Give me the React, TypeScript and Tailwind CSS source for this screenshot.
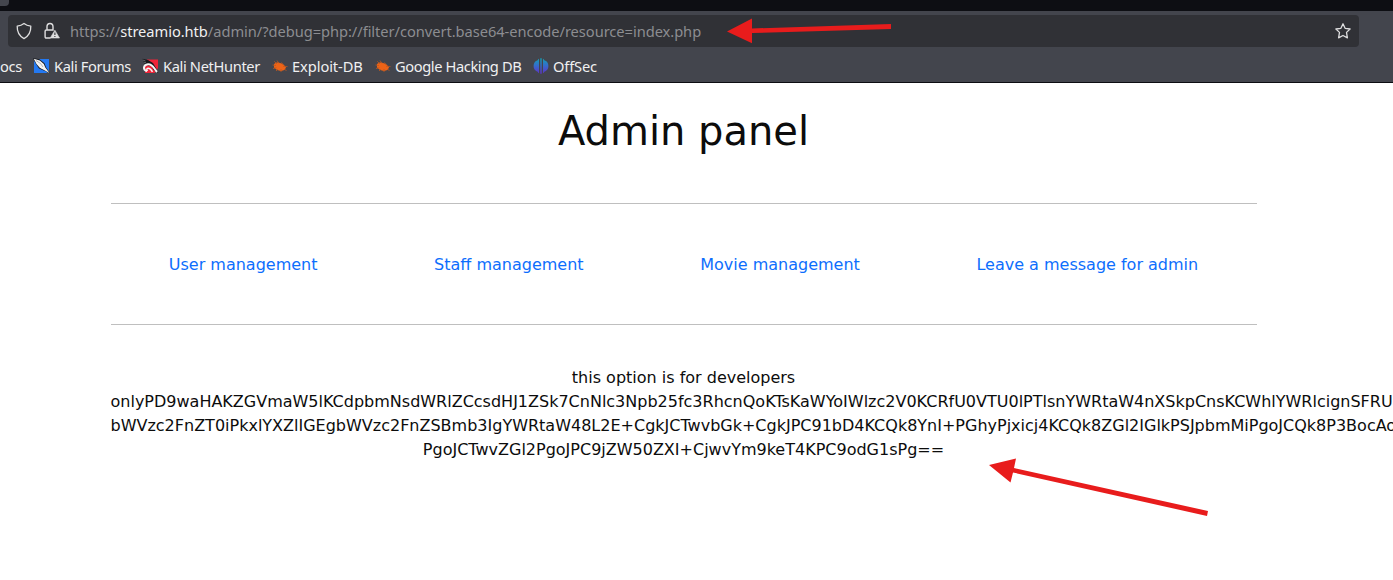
import type { ReactNode } from "react";

function ForumsIcon() {
  return (
    <svg width="17" height="16" viewBox="0 0 17 16">
      <path d="M3 1H16V12.500L13.500 15H1V4z" fill="#2479f2" />
      <path d="M0 0 6.500 1.200l5 4 1.500 4 4 5.800-7.500-3-3.500-1.500L3 6z" fill="#17191d" />
      <path d="m.8.800 6 1.700 4 3.500 1.500 3.500 4.200 5.500-6-3.200-3.500-1.800L3.500 6z" fill="#f3f3f3" />
      <path d="m3 2.500 4.500 3 2.500 3.500" stroke="#85888e" strokeWidth=".6" fill="none" />
    </svg>
  );
}

function NetHunterIcon() {
  return (
    <svg width="17" height="16" viewBox="0 0 17 16">
      <path d="M5 1.500H16V10L12.500 15H3V8z" fill="#ee2438" />
      <path d="M.5.800 6 2l5 3 3 5 2.500 5-5-3-2-4L3 7z" fill="#17191d" />
      <path d="M5 13.200C.5 11.500 1.200 6.800 6 6.200c4.500-.4 5.500 3.600 9 7.800" stroke="#f5f5f5" strokeWidth="2" fill="none" />
      <path d="M5.500 13C3 10 7.500 8.500 10.500 13.800" stroke="#f5f5f5" strokeWidth="1.500" fill="none" />
      <path d="m1 2 2.500 1M2 4.200l2 .6" stroke="#77797e" strokeWidth=".8" />
    </svg>
  );
}

function BugIcon() {
  return (
    <svg width="16" height="16" viewBox="0 0 16 16">
      <path d="M2 6 4.500 4.500h2l3 1 2.500 1.500 2 2.500-1.500 2.500-3.500 1-4-1-3-2.500z" fill="#ed6317" />
      <path d="M.5 7 4 7.500M2.300 3.300 5 6M5 2.500 7 5.500M9.500 4.500l2 2.600M11 8.300l4.500.2M1 10.500l3.500-.8M4 13l2-2M9 14v-3M12 11.200l2.500 1.300" stroke="#bd581f" strokeWidth=".8" fill="none" />
    </svg>
  );
}

function OffSecIcon() {
  return (
    <svg width="16" height="16" viewBox="0 0 16 16">
      <defs>
        <linearGradient id="offsec" gradientUnits="userSpaceOnUse" x1="0" y1="0" x2="0" y2="16">
          <stop offset="0" stopColor="#10a4b4" />
          <stop offset=".5" stopColor="#3769cc" />
          <stop offset="1" stopColor="#6030c8" />
        </linearGradient>
      </defs>
      <path d="M6 .8v14.400C4.700 14.500 5 13.500 3.500 13.200 1.700 12.300.6 10.500.6 8s1.100-4.300 2.900-5.200C5 2.500 4.700 1.500 6 .8zM7.300.3h1.400v15.400H7.300zM10 .8c1.300.7 1 1.700 2.500 2 1.800.9 2.900 2.700 2.900 5.200s-1.100 4.300-2.900 5.200c-1.500.3-1.200 1.300-2.500 2z" fill="url(#offsec)" />
    </svg>
  );
}

function Bookmark({ icon, label, className }: { icon: ReactNode; label: string; className: string }) {
  return (
    <div className={`flex shrink-0 items-center gap-1 ${className}`}>
      {icon}
      <span className="whitespace-nowrap">{label}</span>
    </div>
  );
}

function Browser() {
  return (
    <header className="h-[83px] border-b border-[#0c0d12] bg-[#43454d] font-['Noto_Sans',sans-serif]">
      <div className="h-[11px] bg-[#0d0e13]">
        <div className="h-1.5 w-[9px] rounded-br bg-[#43454d]" />
      </div>
      <div className="pt-1 pl-2">
        <div className="flex h-8 w-[1351px] items-center rounded bg-[#303136] pr-2 pl-2">
          <svg width="16" height="18" viewBox="0 0 16 18" fill="none" stroke="#dededf" strokeWidth="1.3" strokeLinejoin="round">
            <path d="M8 1.400c2 1.700 4.300 2.400 6.800 2.700.2 5.600-1.500 9.800-6.800 12.500C2.700 13.900 1 9.700 1.200 4.100 3.700 3.800 6 3.100 8 1.400z" />
          </svg>
          <svg className="ml-3" width="16" height="18" viewBox="0 0 16 18">
            <path d="M6.500 16H2.300c-.8 0-1.200-.5-1.200-1.200V9.200c0-.8.500-1.200 1.200-1.200h7.400M3 8V4.800c0-4.400 6-4.400 6 0V8" fill="none" stroke="#dededf" strokeWidth="1.400" />
            <path d="M10.900 8.200 15.500 16H6.200z" fill="#dededf" stroke="#dededf" strokeWidth=".6" strokeLinejoin="round" />
            <path d="M10.900 10.500v2.600M10.900 13.900v1.200" stroke="#303136" strokeWidth="1.100" />
          </svg>
          <span className="ml-2.5 whitespace-nowrap text-[14.67px] tracking-[-0.045px] text-[#8c8d91]">
            https://<span className="text-[#f0f0f1]">streamio.htb</span>/admin/?debug=php://filter/convert.base64-encode/resource=index.php
          </span>
          <svg className="ml-auto" width="16" height="16" viewBox="0 0 16 16" fill="none" stroke="#dededf" strokeWidth="1.3" strokeLinejoin="round">
            <path d="m8 .8 2.100 4.500 5 .7-3.600 3.400.9 5.400L8 12.500l-4.400 2.300.9-5.400L.9 6l5-.7z" />
          </svg>
        </div>
      </div>
      <nav className="flex h-[35px] items-center pt-[3px] text-[14.67px] tracking-[-0.36px] text-[#f0f0f1]">
        <span className="w-[33px]">ocs</span>
        <Bookmark className="w-[109px]" icon={<ForumsIcon />} label="Kali Forums" />
        <Bookmark className="w-[130px]" icon={<NetHunterIcon />} label="Kali NetHunter" />
        <Bookmark className="w-[103px] tracking-[-0.08px]" icon={<BugIcon />} label="Exploit-DB" />
        <Bookmark className="w-[158px] tracking-[-0.4px]" icon={<BugIcon />} label="Google Hacking DB" />
        <Bookmark className="w-[80px] tracking-[-0.15px]" icon={<OffSecIcon />} label="OffSec" />
      </nav>
    </header>
  );
}

export default function App() {
  return (
    <div className="relative h-[580px] w-[1393px] overflow-hidden bg-white font-['DejaVu_Sans',sans-serif] text-base leading-6 text-[#0c0c0c]">
      <Browser />
      <main className="ml-[110.5px] w-[1146px]">
        <h1 className="pt-6 text-center text-[40px] leading-[48px]">Admin panel</h1>
        <div className="mt-12 h-px bg-[#bfbfbf]" />
        <div className="flex h-[120px] items-center justify-around pt-0.5 text-[#0d6efd]">
          <a>User management</a>
          <a>Staff management</a>
          <a>Movie management</a>
          <a>Leave a message for admin</a>
        </div>
        <div className="h-px bg-[#bfbfbf]" />
        <div className="pt-[41px] whitespace-nowrap">
          <p className="text-center">this option is for developers</p>
          <p>onlyPD9waHAKZGVmaW5lKCdpbmNsdWRlZCcsdHJ1ZSk7CnNlc3Npb25fc3RhcnQoKTsKaWYoIWlzc2V0KCRfU0VTU0lPTlsnYWRtaW4nXSkpCnsKCWhlYWRlcignSFRU</p>
          <p>bWVzc2FnZT0iPkxlYXZlIGEgbWVzc2FnZSBmb3IgYWRtaW48L2E+CgkJCTwvbGk+CgkJPC91bD4KCQk8YnI+PGhyPjxicj4KCQk8ZGl2IGlkPSJpbmMiPgoJCQk8P3BocAo</p>
          <p className="text-center">PgoJCTwvZGl2PgoJPC9jZW50ZXI+CjwvYm9keT4KPC9odG1sPg==</p>
        </div>
      </main>
      <svg className="pointer-events-none absolute inset-0" width="1393" height="580" viewBox="0 0 1393 580" fill="#e81c1c">
        <path d="m727 31.500 25-13v10l139-4.500v5l-139 4V43.200z" />
        <path d="m989 465 27-6.500-2 9.500 194 43-1 5-194-43.500-2.500 10z" />
      </svg>
    </div>
  );
}
